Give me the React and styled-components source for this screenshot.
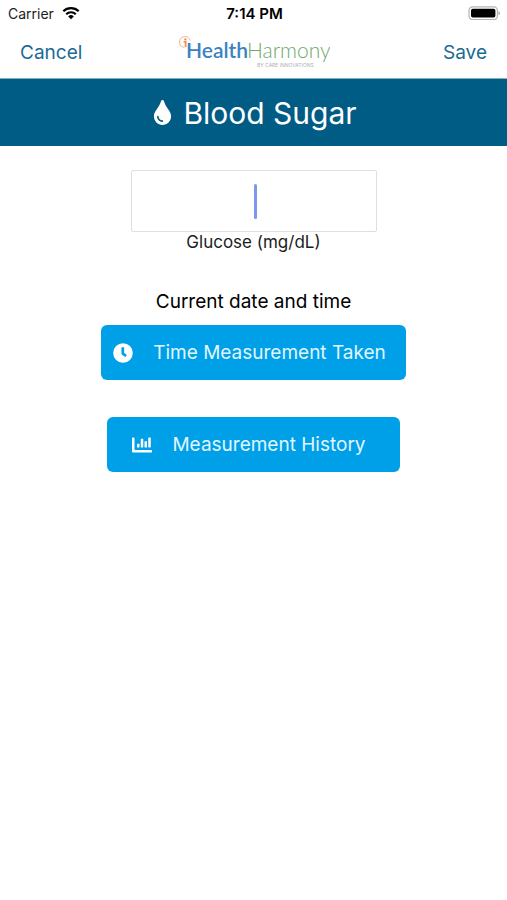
// src/App.jsx
import React, { useState } from 'react';
import styled, { createGlobalStyle } from 'styled-components';
import { FaTint, FaChartBar } from 'react-icons/fa';

const GlobalStyle = createGlobalStyle`
  * {
    box-sizing: border-box;
  }

  body {
    margin: 0;
    background-color: #ffffff;
    color: #1c1c1e;
    font-family: Inter, 'Liberation Sans', sans-serif;
  }
`;

const Screen = styled.div`
  display: flex;
  flex-direction: column;
  min-height: 100vh;
`;

const StatusBar = styled.div`
  display: grid;
  grid-template-columns: 1fr auto 1fr;
  align-items: center;
  height: 26px;
  padding: 0 6px 0 8px;
  font-size: 14px;
`;

const Carrier = styled.div`
  display: flex;
  align-items: center;
  gap: 8px;
`;

const Clock = styled.div`
  font-size: 15px;
  font-weight: 600;
  color: #000000;
`;

const Battery = styled.svg`
  justify-self: end;
`;

const NavBar = styled.header`
  display: grid;
  grid-template-columns: 1fr auto 1fr;
  align-items: center;
  height: 53px;
  padding: 2px 20px 0;
  border-bottom: 1px solid #7fb0c6;
`;

const NavButton = styled.button`
  justify-self: ${(props) => props.$align};
  padding: 0;
  border: none;
  background: none;
  color: #1b6a93;
  font-family: inherit;
  font-size: 19px;
  line-height: 24px;
  cursor: pointer;
`;

const Banner = styled.div`
  display: flex;
  align-items: center;
  justify-content: center;
  gap: 8px;
  height: 67px;
  background-color: #005c84;
  color: #ffffff;
`;

const Title = styled.h1`
  margin: 0;
  font-size: 30px;
  font-weight: 400;
  line-height: 40px;
`;

const Content = styled.main`
  display: flex;
  flex-direction: column;
  align-items: center;
  padding: 24px 20px;
`;

const Field = styled.div`
  position: relative;
  width: 246px;
  max-width: 100%;
`;

const ValueInput = styled.input`
  display: block;
  width: 100%;
  height: 62px;
  padding: 0 12px;
  border: 1px solid #dfdfdf;
  border-radius: 2px;
  outline: none;
  background-color: #ffffff;
  caret-color: transparent;
  font-family: inherit;
  font-size: 30px;
  text-align: center;
`;

const Caret = styled.span`
  position: absolute;
  top: 14px;
  left: 50%;
  width: 3px;
  height: 35px;
  border-radius: 2px;
  background-color: #7d97ee;
  pointer-events: none;
`;

const FieldLabel = styled.label`
  font-size: 17px;
  line-height: 20px;
`;

const TimeText = styled.p`
  margin: 38px 0 11px;
  color: #000000;
  font-size: 19px;
  line-height: 24px;
`;

const ActionButton = styled.button`
  display: flex;
  align-items: center;
  gap: 20px;
  height: 55px;
  margin-bottom: 37px;
  padding: ${(props) => props.$padding};
  border: none;
  border-radius: 6px;
  background-color: #00a0e9;
  color: #ffffff;
  font-family: inherit;
  font-size: 19px;
  line-height: 24px;
  cursor: pointer;

  span {
    color: #e0f6ff;
  }
`;

const WifiIcon = () => (
  <svg width="18" height="14" viewBox="0 0 18 14" fill="none" aria-label="Wi-Fi">
    <path d="M1.3 5.2a11 11 0 0 1 15.4 0" stroke="#000" strokeWidth="2.3" />
    <path d="M4.2 8.2a6.9 6.9 0 0 1 9.6 0" stroke="#000" strokeWidth="2.2" />
    <path d="M9 13.3L6.2 10.4a4 4 0 0 1 5.6 0z" fill="#000" />
  </svg>
);

const BatteryIcon = () => (
  <Battery width="33" height="14" viewBox="0 0 33 14" aria-label="Battery full">
    <rect x="1" y="0.8" width="28.4" height="12.8" rx="3.6" fill="#fff" stroke="#b4b4b4" strokeWidth="1.2" />
    <rect x="3" y="2.8" width="24.4" height="8.8" rx="1.8" fill="#000" />
    <path d="M30.6 5.2c1.5.5 1.5 3.5 0 4z" fill="#8a8a8a" />
  </Battery>
);

const ClockIcon = () => (
  <svg width="20" height="20" viewBox="0 0 20 20" aria-hidden="true">
    <circle cx="10" cy="10" r="9.8" fill="#fff" />
    <path d="M9.8 4.2v6.4l3.3 2.4" fill="none" stroke="#00a0e9" strokeWidth="2.7" strokeLinejoin="round" />
  </svg>
);

const Logo = () => (
  <svg width="152" height="36" viewBox="0 0 152 36" aria-label="Health Harmony by Care Innovations">
    <path d="M6.4 12.4A5.4 5.4 0 1 1 12.2 5.6" fill="none" stroke="#f0b48c" strokeWidth="1" />
    <circle cx="7.4" cy="4.4" r="1.2" fill="#ee9458" />
    <path d="M5.6 6.9h2v5" fill="none" stroke="#ee9458" strokeWidth="1.8" />
    <text x="8" y="23" fontFamily="Lato, sans-serif" fontSize="21" fontWeight="600" fill="#3b82c2">
      Health
    </text>
    <text x="69" y="23" fontFamily="Lato, sans-serif" fontSize="21" fontWeight="300" fill="#6fa86c">
      Harmony
    </text>
    <text x="79" y="32" fontFamily="Inter, sans-serif" fontSize="5" fill="#b0b0b5">
      BY CARE INNOVATIONS
    </text>
  </svg>
);

const App = () => {
  const [glucose, setGlucose] = useState('');

  return (
    <Screen>
      <GlobalStyle />
      <StatusBar>
        <Carrier>
          Carrier
          <WifiIcon />
        </Carrier>
        <Clock>7:14 PM</Clock>
        <BatteryIcon />
      </StatusBar>
      <NavBar>
        <NavButton type="button" $align="start">Cancel</NavButton>
        <Logo />
        <NavButton type="button" $align="end">Save</NavButton>
      </NavBar>
      <Banner>
        <FaTint size={25} />
        <Title>Blood Sugar</Title>
      </Banner>
      <Content>
        <Field>
          <ValueInput
            id="glucose"
            inputMode="numeric"
            value={glucose}
            onChange={(e) => setGlucose(e.target.value)}
          />
          {glucose === '' && <Caret />}
        </Field>
        <FieldLabel htmlFor="glucose">Glucose (mg/dL)</FieldLabel>
        <TimeText>Current date and time</TimeText>
        <ActionButton type="button" $padding="0 20px 0 12px">
          <ClockIcon />
          <span>Time Measurement Taken</span>
        </ActionButton>
        <ActionButton type="button" $padding="0 34px 0 25px">
          <FaChartBar size={20} />
          <span>Measurement History</span>
        </ActionButton>
      </Content>
    </Screen>
  );
};

export default App;
